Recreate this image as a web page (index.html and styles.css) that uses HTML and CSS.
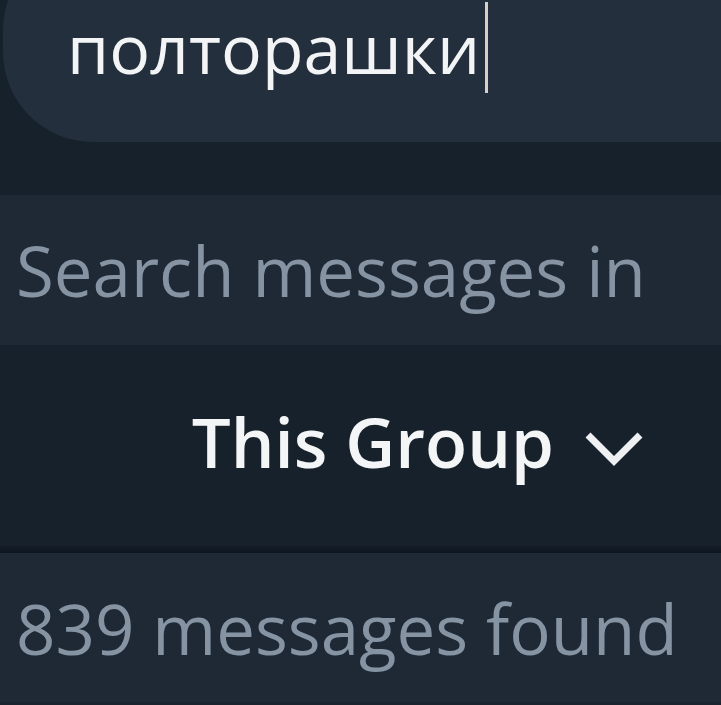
FILE: index.html
```html
<!DOCTYPE html>
<html lang="en">
<head>
<meta charset="utf-8">
<title>Search</title>
<link rel="stylesheet" href="styles.css">
</head>
<body>
<div class="panel">
  <div class="search-wrap">
    <div class="field">
      <span class="query">полторашки</span><span class="caret"></span>
    </div>
  </div>
  <div class="row label">Search messages in</div>
  <div class="scope">
    <span class="scope-name">This Group</span>
    <svg class="chevron" width="60" height="36" viewBox="0 0 60 36" aria-hidden="true">
      <polyline points="4,5 30,31 56,5" fill="none" stroke="#eef0f2" stroke-width="7" stroke-linecap="butt" stroke-linejoin="miter"/>
    </svg>
  </div>
  <div class="divider"></div>
  <div class="row count">839 messages found</div>
  <div class="bottom-line"></div>
</div>
</body>
</html>
```

FILE: styles.css
```css
html, body {
  margin: 0;
  padding: 0;
  background: #17212b;
  overflow: hidden;
}

.panel {
  width: 721px;
  height: 705px;
  font-family: "Open Sans", "Noto Sans", sans-serif;
  display: flex;
  flex-direction: column;
}

.search-wrap {
  height: 195px;
  flex: none;
}

.field {
  margin-top: -60px;
  margin-left: 3px;
  height: 202px;
  box-sizing: border-box;
  padding-top: 62px;
  padding-left: 64px;
  background: #242f3d;
  border-radius: 90px 0 0 90px;
  display: flex;
  align-items: flex-start;
}

.query {
  font-size: 68px;
  line-height: 92px;
  color: #f3f4f5;
  white-space: nowrap;
}

.caret {
  display: block;
  width: 3px;
  height: 91px;
  margin-left: 5px;
  background: #d8d0c8;
}

.row {
  flex: none;
  box-sizing: border-box;
  background: #1f2935;
  padding-left: 16px;
  font-size: 69px;
  color: #8593a2;
  white-space: nowrap;
}

.label {
  height: 150px;
  line-height: 150px;
}

.scope {
  flex: none;
  height: 201px;
  box-sizing: border-box;
  padding-top: 49px;
  padding-right: 77px;
  display: flex;
  justify-content: flex-end;
  align-items: flex-start;
  background: #17212b;
}

.scope-name {
  font-size: 69px;
  font-weight: 560;
  line-height: 95px;
  color: #f4f5f6;
  white-space: nowrap;
}

.chevron {
  display: block;
  margin-left: 30px;
  margin-top: 36px;
}

.divider {
  flex: none;
  height: 7px;
  background: linear-gradient(#141d27, #0e1620);
}

.count {
  height: 149px;
  line-height: 150px;
}

.bottom-line {
  flex: none;
  height: 3px;
  background: #1a232e;
}
```
